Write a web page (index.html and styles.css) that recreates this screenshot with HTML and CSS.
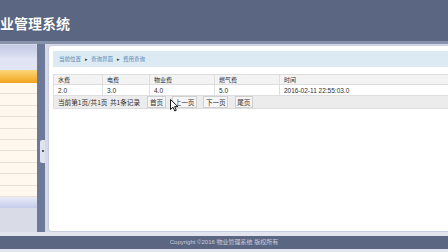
FILE: index.html
```html
<!DOCTYPE html>
<html lang="zh-CN">
<head>
    <meta charset="UTF-8">
    <title>物业管理系统</title>
    <link rel="stylesheet" href="styles.css">
</head>
<body>
    <div class="page">
        <!-- top bar -->
        <header class="top">
            <h1 class="logo">物业管理系统</h1>
            <div class="greet">上午好，admin</div>
        </header>
        <div class="top-strip"></div>

        <div class="main">
            <aside class="side">
                <div class="side-head"></div>
                <div class="side-sub"></div>
                <ul class="menu">
                    <li class="active"></li>
                    <li></li>
                    <li></li>
                    <li></li>
                    <li></li>
                    <li></li>
                    <li></li>
                    <li></li>
                    <li></li>
                    <li></li>
                    <li></li>
                </ul>
                <div class="side-foot"></div>
            </aside>

            <div class="split"><span class="handle"></span></div>

            <div class="panel">
                <div class="crumb">当前位置<span class="arr">&#9656;</span>查询界面<span class="arr">&#9656;</span>费用查询</div>
                <table class="grid">
                    <tr class="head">
                        <td class="c1">水费</td>
                        <td class="c2">电费</td>
                        <td class="c3">物业费</td>
                        <td class="c4">燃气费</td>
                        <td>时间</td>
                    </tr>
                    <tr class="row">
                        <td>2.0</td>
                        <td>3.0</td>
                        <td>4.0</td>
                        <td>5.0</td>
                        <td>2016-02-11 22:55:03.0</td>
                    </tr>
                    <tr class="pager">
                        <td colspan="5">
                            <span class="info">当前第1页/共1页</span>
                            <span class="info">共1条记录</span>
                            <span class="btn first">首页</span>
                            <span class="btn">上一页</span>
                            <span class="btn">下一页</span>
                            <span class="btn">尾页</span>
                        </td>
                    </tr>
                </table>
                <svg class="cursor" width="9" height="13" viewBox="0 0 9 13">
                    <path d="M0.5 0.5 L0.5 10.5 L3 8.2 L4.8 12 L6.3 11.3 L4.6 7.6 L7.8 7.6 Z" fill="#ffffff" stroke="#000000" stroke-width="0.9" stroke-linejoin="round" />
                </svg>
            </div>
        </div>

        <footer class="foot">
            <div class="foot-bar">Copyright ©2016 物业管理系统 版权所有</div>
        </footer>
    </div>
</body>
</html>
```

FILE: styles.css
```css
* {
    box-sizing: border-box;
}

body {
    margin: 0;
    width: 448px;
    height: 252px;
    overflow: hidden;
    font-family: "Liberation Sans", "Noto Sans CJK SC", sans-serif;
    background: #d6d9e6;
}

.page {
    display: flex;
    flex-direction: column;
    height: 252px;
    overflow: hidden;
}

/* header */
.top {
    height: 41px;
    background: #5b6683;
    display: flex;
    justify-content: space-between;
    align-items: center;
    padding-top: 4px;
    overflow: hidden;
}

.logo {
    margin: 0 0 0 -14px;
    font-family: "Noto Sans CJK SC", sans-serif;
    font-size: 14px;
    font-weight: 700;
    color: #ffffff;
    text-shadow: 0 0 1px rgba(0, 0, 0, 0.4);
}

.greet {
    margin: 10px -44px 0 0;
    font-family: "Noto Sans CJK SC", sans-serif;
    font-size: 6px;
    color: #c6cbdc;
    white-space: nowrap;
}

.top-strip {
    height: 3px;
    background: #8892ab;
}

/* body */
.main {
    height: 188px;
    display: flex;
}

.side {
    width: 37px;
    flex: none;
    margin-top: 1px;
    background: #d9dbe6;
    border-top-right-radius: 4px;
    overflow: hidden;
    display: flex;
    flex-direction: column;
}

.side-head {
    height: 13px;
    background: linear-gradient(#c3c9e5, #dde1f2);
}

.side-sub {
    height: 12px;
    background: #e0e4f5;
}

.menu {
    list-style: none;
    margin: 0;
    padding: 0;
}

.menu li {
    height: 11.4px;
    background: #fff8ef;
    border-bottom: 1px solid #e9dfd2;
}

.menu li.active {
    height: 13px;
    background: linear-gradient(#fbd77a, #f2a41e);
    border-bottom: none;
}

.side-foot {
    height: 11px;
    background: linear-gradient(#e9ecf8, #c5cbe9);
}

.split {
    width: 8px;
    flex: none;
    background: #6d7998;
    display: flex;
    align-items: flex-start;
    justify-content: flex-end;
}

.handle {
    width: 5px;
    height: 23px;
    margin-top: 96px;
    background: #dfe3f0;
    border-radius: 2px 0 0 2px;
    position: relative;
}

.handle::after {
    content: "";
    position: absolute;
    left: 2px;
    top: 10px;
    width: 1.5px;
    height: 2px;
    background: #555c70;
}

.panel {
    flex: none;
    width: 420px;
    margin: 1px 0 0 3px;
    height: 187px;
    background: #ffffff;
    border: 1px solid #c8cce0;
    border-radius: 4px;
    padding: 5px 4px 0 4px;
    position: relative;
}

.crumb {
    height: 16px;
    background: #dcebf3;
    padding-left: 6px;
    font-family: "Noto Sans CJK SC", sans-serif;
    font-size: 5.5px;
    line-height: 16px;
    color: #5a86b6;
}

.crumb .arr {
    color: #333333;
    font-size: 5px;
    margin: 0 3.5px;
}

.grid {
    margin-top: 7px;
    width: 100%;
    border-collapse: collapse;
    font-family: "Noto Sans CJK SC", sans-serif;
    color: #2e2e2e;
}

.grid td {
    border: 1px solid #dedede;
    padding: 0 0 0 4px;
    white-space: nowrap;
}

.head td {
    height: 10px;
    font-size: 6px;
    background: #f3f3f3;
}

.row td {
    height: 11px;
    font-family: "Liberation Sans", sans-serif;
    font-size: 6.5px;
}

.c1 { width: 49px; }
.c2 { width: 47px; }
.c3 { width: 65px; }
.c4 { width: 65px; }

.pager td {
    height: 13px;
    font-size: 6.6px;
    background: #ececec;
}

.info {
    margin-right: 1px;
}

.btn {
    display: inline-block;
    padding: 0 1.5px;
    margin-left: 5px;
    line-height: 10px;
    border: 1px solid #cfcfcf;
    background: #f6f6f6;
}

.btn.first {
    margin-left: 5px;
}

.cursor {
    position: absolute;
    left: 121px;
    top: 53px;
}

/* footer */
.foot {
    height: 20px;
    padding-top: 4px;
    background: #e3e5ee;
}

.foot-bar {
    height: 13px;
    background: #5b6683;
    text-align: center;
    font-family: "Liberation Sans", "Noto Sans CJK SC", sans-serif;
    font-size: 6px;
    line-height: 13px;
    color: #c8cddd;
}
```
